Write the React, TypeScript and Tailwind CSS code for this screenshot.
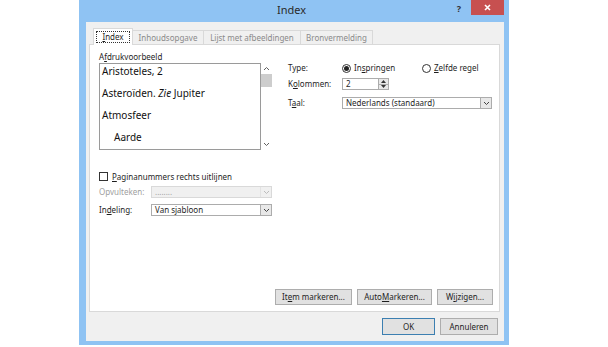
import React from "react";

const U = ({ children }: { children: React.ReactNode }) => (
  <span className="underline underline-offset-[1px] decoration-[0.5px]">{children}</span>
);

const Chevron = ({ color = "#444" }: { color?: string }) => (
  <svg width="7" height="5" viewBox="0 0 7 5">
    <path d="M1 1 L3.5 3.5 L6 1" fill="none" stroke={color} strokeWidth="1" />
  </svg>
);

const ChevronUp = ({ color = "#606060" }: { color?: string }) => (
  <svg width="7" height="5" viewBox="0 0 7 5">
    <path d="M1 4 L3.5 1.5 L6 4" fill="none" stroke={color} strokeWidth="1" />
  </svg>
);

function Select({ text, width, disabled }: { text: string; width: string; disabled?: boolean }) {
  return (
    <div
      className={`${width} h-[12px] flex items-stretch border ${
        disabled ? "border-[#d9d9d9] bg-[#f0f0f0] text-[#a0a0a0]" : "border-[#acacac] bg-white text-[#1e1e1e]"
      }`}
    >
      <div className="flex-1 flex items-center pl-[3px] leading-none">{text}</div>
      <div
        className={`w-[11px] flex items-center justify-center border-l ${
          disabled ? "border-[#e3e3e3] bg-[#f0f0f0]" : "border-[#acacac] bg-[#e8e8e8]"
        }`}
      >
        <Chevron color={disabled ? "#bcbcbc" : "#444"} />
      </div>
    </div>
  );
}

function Btn({ children, width }: { children: React.ReactNode; width: string }) {
  return (
    <div
      className={`${width} h-[16px] flex items-center justify-center leading-none text-[#1e1e1e] border border-[#adadad] bg-[#e1e1e1]`}
    >
      {children}
    </div>
  );
}

export default function App() {
  return (
    <div className="w-[608px] h-[347px] bg-white font-['Noto_Sans',sans-serif] text-[#1e1e1e]">
      <div className="ml-[79px] w-[430px] h-[345px] bg-[#8fc3f3] flex flex-col">
        {/* title bar */}
        <div className="h-[22px] flex items-start">
          <div className="flex-1" />
          <div className="text-[11px] leading-none text-[#2a2a2a] pt-[4px]">Index</div>
          <div className="flex-1 flex justify-end items-start pr-[5px]">
            <div className="text-[9px] font-bold leading-none text-[#333] pt-[4px] mr-[10px]">?</div>
            <div className="w-[33px] h-[15px] bg-[#c75050] flex items-center justify-center">
              <svg width="7" height="7" viewBox="0 0 7 7">
                <path d="M1 1 L6 6 M6 1 L1 6" stroke="white" strokeWidth="1.6" />
              </svg>
            </div>
          </div>
        </div>

        {/* client area */}
        <div className="flex-1 ml-[7px] mr-[5px] mb-[4px] bg-[#f0f0f0] flex flex-col pl-[3px] pr-[4px] pt-[6px] text-[8px]">
          {/* tabs */}
          <div className="h-[16px] flex items-end pl-[4px] leading-none relative z-10">
            <div className="w-[40px] h-[17px] -mb-px bg-white border border-b-0 border-[#d9d9d9] flex items-center justify-center">
              <div className="border border-dotted border-[#333] px-[5px] py-[1px]">
                <U>I</U>ndex
              </div>
            </div>
            <div className="w-[71px] h-[14px] bg-[#f0f0f0] border border-b-0 border-l-0 border-[#d9d9d9] flex items-center justify-center text-[#8a8a8a]">
              Inhoudsopgave
            </div>
            <div className="w-[97px] h-[14px] bg-[#f0f0f0] border border-b-0 border-l-0 border-[#d9d9d9] flex items-center justify-center text-[#8a8a8a]">
              Lijst met afbeeldingen
            </div>
            <div className="w-[72px] h-[14px] bg-[#f0f0f0] border border-b-0 border-l-0 border-[#d9d9d9] flex items-center justify-center text-[#8a8a8a]">
              Bronvermelding
            </div>
          </div>

          {/* panel */}
          <div className="h-[268px] bg-white border border-[#d9d9d9] flex flex-col pl-[9px] pt-[8px] pr-[6px] pb-[6px] leading-none">
            <div className="flex">
              {/* left column */}
              <div className="w-[173px] flex flex-col">
                <div className="h-[10px]">
                  A<U>f</U>drukvoorbeeld
                </div>
                <div className="flex h-[87px]">
                  <div className="w-[162px] h-[87px] border border-[#9a9a9a] flex flex-col pl-[2px] text-[10px] text-[#111] overflow-hidden">
                    <div className="h-[22px] shrink-0 leading-[14px]">Aristoteles, 2</div>
                    <div className="h-[22px] shrink-0 leading-[14px]">
                      Asteroïden. <i>Zie</i> Jupiter
                    </div>
                    <div className="h-[22px] shrink-0 leading-[14px]">Atmosfeer</div>
                    <div className="h-[22px] shrink-0 leading-[15px] pl-[12px]">Aarde</div>
                  </div>
                  <div className="w-[11px] h-[87px] flex flex-col items-center">
                    <div className="h-[11px] flex items-center justify-center">
                      <ChevronUp />
                    </div>
                    <div className="w-[11px] h-[13px] bg-[#cdcdcd]" />
                    <div className="flex-1" />
                    <div className="h-[11px] flex items-center justify-center">
                      <Chevron color="#606060" />
                    </div>
                  </div>
                </div>

                <div className="mt-[22px] h-[9px] flex items-center">
                  <div className="w-[9px] h-[9px] border border-[#333] bg-white mr-[4px]" />
                  <span>
                    <U>P</U>aginanummers rechts uitlijnen
                  </span>
                </div>
                <div className="mt-[5px] flex items-center">
                  <div className="w-[52px] text-[#a0a0a0]">Opvulteken:</div>
                  <Select text="........" width="w-[121px]" disabled />
                </div>
                <div className="mt-[6px] flex items-center">
                  <div className="w-[52px]">
                    In<U>d</U>eling:
                  </div>
                  <Select text="Van sjabloon" width="w-[121px]" />
                </div>
              </div>

              {/* right column */}
              <div className="ml-[16px] flex flex-col">
                <div className="mt-[10px] h-[10px] flex items-center">
                  <div className="w-[54px]">Type:</div>
                  <div className="w-[9px] h-[9px] rounded-full border border-[#333] bg-white flex items-center justify-center mr-[3px]">
                    <div className="w-[5px] h-[5px] rounded-full bg-[#222]" />
                  </div>
                  <div className="w-[68px]">
                    In<U>s</U>pringen
                  </div>
                  <div className="w-[9px] h-[9px] rounded-full border border-[#333] bg-white mr-[3px]" />
                  <div>
                    <U>Z</U>elfde regel
                  </div>
                </div>
                <div className="mt-[5px] flex items-center">
                  <div className="w-[54px]">
                    K<U>o</U>lommen:
                  </div>
                  <div className="w-[47px] h-[12px] border border-[#acacac] bg-white flex">
                    <div className="flex-1 flex items-center pl-[3px]">2</div>
                    <div className="w-[10px] flex flex-col border-l border-[#acacac] bg-[#e8e8e8]">
                      <div className="flex-1 flex items-center justify-center border-b border-[#acacac]">
                        <svg width="5" height="3" viewBox="0 0 5 3">
                          <path d="M0 3 L2.5 0 L5 3 Z" fill="#333" />
                        </svg>
                      </div>
                      <div className="flex-1 flex items-center justify-center">
                        <svg width="5" height="3" viewBox="0 0 5 3">
                          <path d="M0 0 L2.5 3 L5 0 Z" fill="#333" />
                        </svg>
                      </div>
                    </div>
                  </div>
                </div>
                <div className="mt-[7px] flex items-center">
                  <div className="w-[54px]">
                    T<U>a</U>al:
                  </div>
                  <Select text="Nederlands (standaard)" width="w-[150px]" />
                </div>
              </div>
            </div>

            {/* bottom buttons in panel */}
            <div className="mt-auto flex justify-end gap-[5px]">
              <Btn width="w-[77px]">
                It<U>e</U>m markeren...
              </Btn>
              <Btn width="w-[75px]">
                Auto<U>M</U>arkeren...
              </Btn>
              <Btn width="w-[56px]">
                W<U>i</U>jzigen...
              </Btn>
            </div>
          </div>

          {/* dialog buttons */}
          <div className="mt-[6px] flex justify-end gap-[5px] pr-[2px]">
            <div className="w-[53px] h-[17px] flex items-center justify-center border border-[#3c7fb1] bg-[#e1e1e1] leading-none">
              OK
            </div>
            <div className="w-[58px] h-[17px] flex items-center justify-center border border-[#adadad] bg-[#e1e1e1] leading-none">
              Annuleren
            </div>
          </div>
        </div>
      </div>
    </div>
  );
}
